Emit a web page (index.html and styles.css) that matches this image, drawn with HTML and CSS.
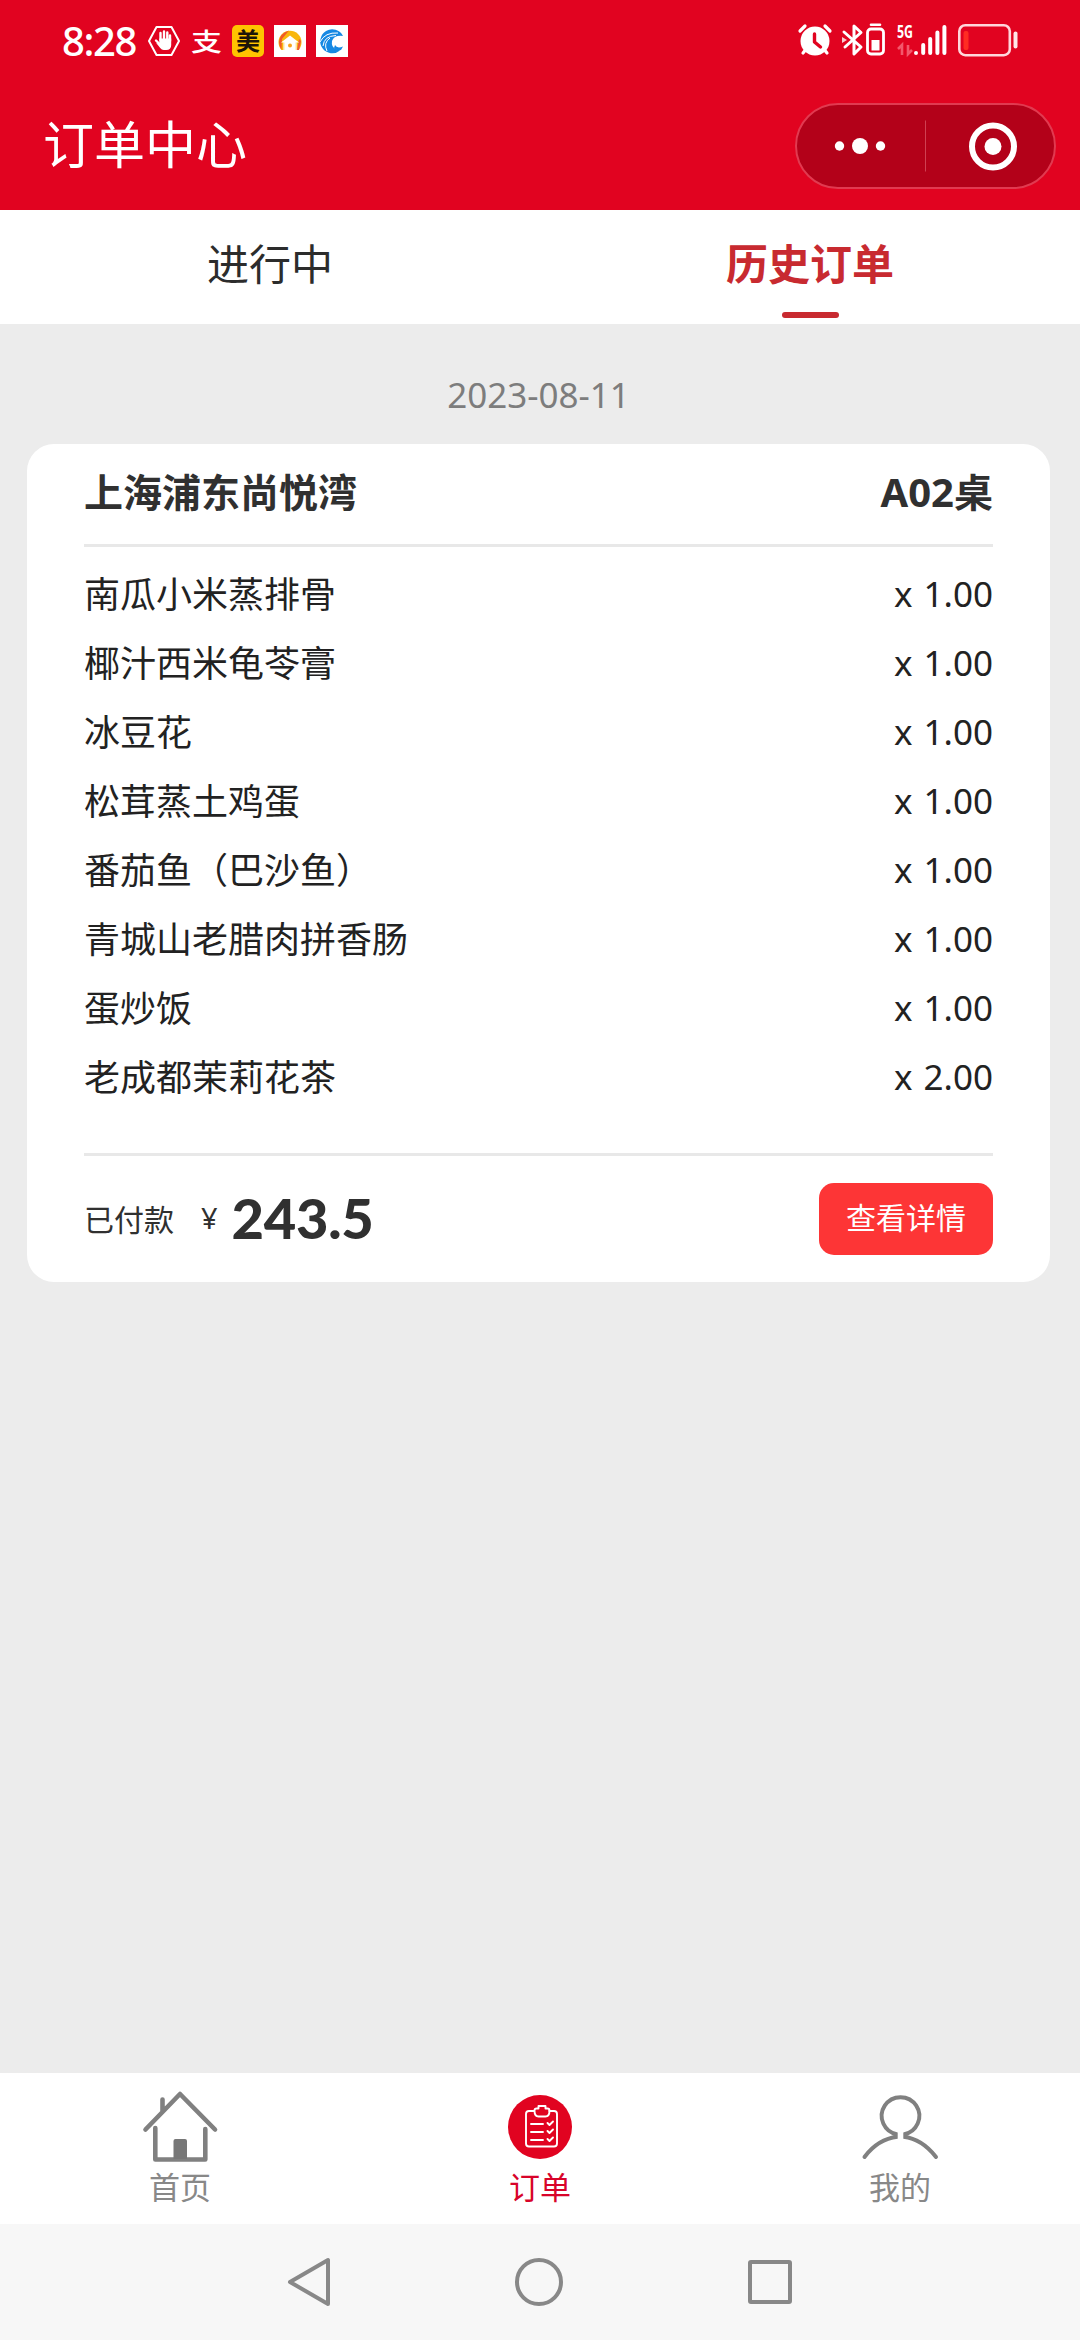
FILE: index.html
```html
<!DOCTYPE html>
<html lang="zh-CN">
<head>
<meta charset="utf-8">
<title>订单中心</title>
<link rel="stylesheet" href="styles.css">
</head>
<body>
<header class="header">
  <div class="status">
    <div class="status-left">
      <span class="time">8:28</span>
      <svg class="hand" width="32" height="32" viewBox="0 0 32 32"><path d="M8.500 2h15L31 16l-7.500 14h-15L1 16z" fill="none" stroke="#fff" stroke-width="2" stroke-linejoin="round"/><path d="M12.500 15V8M16 14V6.500M19.300 15V7.500M22 16v-5.500M8 15.500l5 5" stroke="#fff" stroke-width="2.400" stroke-linecap="round"/><path d="M11.300 13.500h11.900V20q0 5-5 5h-2.500q-2 0-3.500-2l-4-5 3.100.5z" fill="#fff"/></svg>
      <span class="alipay">支</span>
      <span class="meituan">美</span>
      <svg class="app" width="32" height="32" viewBox="0 0 32 32"><path fill="#fff" d="M0 0h32v32H0z"/><path d="M7.500 25a11.500 11.500 0 1 1 17 0z" fill="#f9b70d"/><path d="M7.500 25Q5 21 5 17q1-9 10-11.500L8 14z" fill="#f15a29"/><path d="M25 14l2 2-2 9h-2z" fill="#ef5a38"/><path d="M16 10.500 25 17.500h-2.500v9h-13v-9H7z" fill="#fff"/><path d="M10 25v-7.500M22 25v-7.500" stroke="#fde3a0"/><circle cx="16" cy="20.500" r="2" fill="#f9a51c"/></svg>
      <svg class="app" width="32" height="32" viewBox="0 0 32 32"><path fill="#fff" d="M0 0h32v32H0z"/><path d="M27 11A12 12 0 1 0 24 25.500L20 24q-5-2-4-8 2-6 11-5z" fill="#1688e3"/><path d="M4 17Q9 7 22 8M7 21Q8 11 20 10.500M11 26q-4-8 3-13" fill="none" stroke="#fff" stroke-width="1"/><path d="M19 20q2 4 8 1.500L25 25q-4 1.500-7-2z" fill="#1688e3"/></svg>
    </div>
    <div class="status-right">
      <svg width="34" height="32" viewBox="0 0 34 32"><circle cx="17" cy="17" r="14.500" fill="#fff"/><path d="M2 7l5-5M32 7l-5-5M5 29l4-5M29 29l-4-5" stroke="#fff" stroke-width="3.200" stroke-linecap="round"/><path d="M16.500 10v8l6 5" fill="none" stroke="#e10320" stroke-width="3.400" stroke-linecap="round" stroke-linejoin="round"/></svg>
      <svg class="bt" width="44" height="34" viewBox="0 0 44 34"><path d="M2 9l17 15-7 7V3l7 6.500L3 24" fill="none" stroke="#fff" stroke-width="3" stroke-linejoin="round" stroke-linecap="round"/><path d="M0 14l5 3-5 3z" fill="#fff" opacity=".8"/><rect x="25.500" y="6" width="16" height="25" rx="3.500" fill="none" stroke="#fff" stroke-width="2.800"/><path d="M29 1.700h9" stroke="#fff" stroke-width="2.600" stroke-linecap="round"/><path fill="#fff" d="M29.500 17h8v10.500h-8z"/></svg>
      <svg class="signal" width="50" height="34" viewBox="0 0 50 34"><text class="five-g" x="0" y="15" textLength="16" lengthAdjust="spacingAndGlyphs">5G</text><path d="M1 26l4-4v10M11 22v9l4-4" fill="none" stroke="#f3586c" stroke-width="2.600"/><g stroke="#fff" stroke-width="4" stroke-linecap="round"><path d="M19 30v.1M26.200 22v8M33.200 16v14M40.400 9.500V30M47.400 4v26"/></g></svg>
      <svg class="battery" width="60" height="34" viewBox="0 0 60 34"><rect x="1.300" y="2.200" width="50.500" height="30" rx="6" fill="none" stroke="#ffd6db" stroke-width="2.600"/><rect x="5.500" y="8" width="5" height="19" rx="2" fill="#ff2c22"/><path d="M57.500 10.500v13" stroke="#ffe6e8" stroke-width="4" stroke-linecap="round"/></svg>
    </div>
  </div>
  <div class="titlebar">
    <h1 class="title">订单中心</h1>
    <div class="capsule">
      <svg width="261" height="86" viewBox="0 0 261 86"><rect x="1" y="1" width="259" height="84" rx="42" fill="#b30119" stroke="#e13a50" stroke-width="2"/><g fill="#fff"><circle cx="44.500" cy="43" r="4.700"/><circle cx="65" cy="43" r="8"/><circle cx="85.500" cy="43" r="4.700"/><circle cx="198" cy="43.500" r="8.500"/></g><path d="M130.500 17.500v51" stroke="#cf4052"/><circle cx="198" cy="43.500" r="21" fill="none" stroke="#fff" stroke-width="6"/></svg>
    </div>
  </div>
</header>
<nav class="tabs">
  <div class="tab">进行中</div>
  <div class="tab tab-active"><span>历史订单</span><i class="underline"></i></div>
</nav>
<main class="content">
  <div class="date">2023-08-11</div>
  <section class="card">
    <div class="card-head"><span>上海浦东尚悦湾</span><span class="table-no"><span class="latin-bold">A02</span>桌</span></div>
    <ul class="items">
      <li><span>南瓜小米蒸排骨</span><span class="qty">x 1.00</span></li>
      <li><span>椰汁西米龟苓膏</span><span class="qty">x 1.00</span></li>
      <li><span>冰豆花</span><span class="qty">x 1.00</span></li>
      <li><span>松茸蒸土鸡蛋</span><span class="qty">x 1.00</span></li>
      <li><span>番茄鱼（巴沙鱼）</span><span class="qty">x 1.00</span></li>
      <li><span>青城山老腊肉拼香肠</span><span class="qty">x 1.00</span></li>
      <li><span>蛋炒饭</span><span class="qty">x 1.00</span></li>
      <li><span>老成都茉莉花茶</span><span class="qty">x 2.00</span></li>
    </ul>
    <div class="card-foot">
      <span class="paid">已付款</span><span class="yen">¥</span><span class="amount">243.5</span>
      <button class="detail">查看详情</button>
    </div>
  </section>
</main>
<footer class="tabbar">
  <div class="nav-item">
    <svg width="80" height="80" viewBox="0 0 80 80"><g fill="none" stroke="#808080" stroke-width="4.600" stroke-linecap="round" stroke-linejoin="round"><path d="M5.500 48.500 40 13l35 35.500M22.500 30V18.500"/><path d="M15.300 47v31.500h50V48"/></g><path d="M33.500 78V60q0-2 2-2h9.500q2 0 2 2v18z" fill="#777"/></svg>
    <span>首页</span>
  </div>
  <div class="nav-item nav-active">
    <svg width="80" height="80" viewBox="0 0 80 80"><circle cx="40" cy="46" r="32" fill="#e10320"/><g transform="translate(1 -1)" fill="none" stroke="#fff" stroke-width="1.900" stroke-linecap="round" stroke-linejoin="round"><path d="M33.500 31H28q-3 0-3 3v29.500q0 3 3 3h25q3 0 3-3V34q0-3-3-3h-5M33.500 30.500q0-2 2-2h2V26h7v2.500h2q2 0 2 2 0 6-4 6h-7q-4 0-4-6z"/><path d="M30 44h12M30 52h12M30 60h12M46.500 43l2 2 3.500-3.500M46.500 51l2 2 3.500-3.500M46.500 59l2 2 3.500-3.500"/></g></svg>
    <span>订单</span>
  </div>
  <div class="nav-item">
    <svg width="80" height="80" viewBox="0 0 80 80"><path d="M4.500 76Q18 58 37.500 55.800V53.500A18.800 18.800 0 1 1 43.500 53.500V55.800Q62 58 76 76" fill="none" stroke="#808080" stroke-width="4" stroke-linecap="round"/><path d="M37.700 49h5.600v10h-5.600z" fill="#fff"/></svg>
    <span>我的</span>
  </div>
</footer>
<div class="sysnav">
  <svg width="46" height="52" viewBox="0 0 46 52"><path d="M42 4v44L4 26z" fill="none" stroke="#888" stroke-width="4" stroke-linejoin="round"/></svg>
  <svg width="52" height="52" viewBox="0 0 52 52"><circle cx="26" cy="26" r="22" fill="none" stroke="#888" stroke-width="4"/></svg>
  <svg width="48" height="52" viewBox="0 0 48 52"><rect x="4" y="6" width="40" height="40" rx="1" fill="none" stroke="#888" stroke-width="4"/></svg>
</div>
</body>
</html>
```
FILE: styles.css
```css
* { box-sizing: border-box; margin: 0; padding: 0; }
body {
  width: 1080px; height: 2340px; overflow: hidden;
  display: flex; flex-direction: column;
  background: #ececec; color: #222;
  font-family: "Noto Sans CJK SC", sans-serif;
}
svg { display: block; flex: none; overflow: visible; }
.header { height: 210px; flex: none; background: #e10320; color: #fff; }
.status { height: 82px; display: flex; justify-content: space-between; padding-left: 62px; }
.status-left, .status-right { display: flex; align-items: center; }
.time { width: 86px; font: 500 40px/82px "Noto Sans", sans-serif; letter-spacing: -1.4px; }
.hand { margin-right: 11px; }
.alipay { width: 32px; margin-right: 9px; font-size: 31px; line-height: 76px; font-weight: 500; transform: scaleY(.8); }
.meituan {
  width: 32px; height: 32px; margin-right: 10px; border-radius: 5px;
  background: #ffc400; color: #1c1608;
  font-size: 24px; font-weight: 700; line-height: 30px; text-align: center;
}
.app { margin-right: 10px; }
.status-right { padding-right: 62px; padding-bottom: 2px; }
.bt { margin-left: 10px; }
.signal { margin-left: 11px; }
.battery { margin-left: 11px; }
.five-g { font: 700 18px "Noto Sans", sans-serif; fill: #fff; }
.titlebar { height: 128px; display: flex; justify-content: space-between; padding: 21px 24px 0 43px; }
.title { font-size: 51px; font-weight: 400; line-height: 79px; height: 86px; }
.tabs { height: 114px; flex: none; display: flex; background: #fff; }
.tab { width: 50%; text-align: center; font-size: 42px; line-height: 104px; color: #2c2c2c; }
.tab-active { display: flex; flex-direction: column; align-items: center; font-weight: 700; color: #c82a30; line-height: 100px; padding-top: 2px; }
.tab-active span { height: 100px; }
.underline { width: 57px; height: 6px; border-radius: 3px; background: #c82a30; }
.content { flex: 1; padding: 0 30px 0 27px; }
.date { height: 120px; padding-top: 21px; font: 400 35px/100px "Noto Sans", sans-serif; text-align: center; color: #7d7d7d; }
.card { height: 838px; background: #fff; border-radius: 27px; padding: 0 57px; }
.card-head {
  height: 103px; border-bottom: 3px solid #e8e8e8;
  display: flex; justify-content: space-between;
  font-size: 39px; font-weight: 700; line-height: 92px; color: #303030;
}
.latin-bold { font-family: "Noto Sans", sans-serif; font-size: 40px; }
.items { height: 609px; padding-top: 13px; list-style: none; border-bottom: 3px solid #e8e8e8; }
.items li { height: 69px; display: flex; justify-content: space-between; font-size: 36px; line-height: 64px; }
.qty { font-family: "Noto Sans", sans-serif; font-size: 35px; line-height: 67px; word-spacing: 2px; }
.card-foot { height: 126px; display: flex; align-items: center; padding-bottom: 3px; color: #303030; font-size: 30px; }
.yen { margin: 0 14px 0 27px; font: 400 29px "Noto Sans", sans-serif; }
.amount { font: 900 56px/122px Lato, sans-serif; letter-spacing: -0.3px; }
.detail {
  width: 174px; height: 72px; margin: 3px 0 0 auto; border: 0; border-radius: 15px;
  background: #fd3536; color: #fff; font: 400 30px/64px "Noto Sans CJK SC", sans-serif; padding-bottom: 6px;
}
.tabbar { height: 151px; flex: none; display: flex; background: #fff; }
.nav-item { width: 33.333%; display: flex; flex-direction: column; align-items: center; padding-top: 8px; color: #888; font-size: 31px; line-height: 49px; }
.nav-active { color: #d8042a; }
.sysnav { height: 116px; flex: none; display: flex; align-items: center; justify-content: space-between; background: #f7f7f7; padding: 0 286px 0 286px; }
```
